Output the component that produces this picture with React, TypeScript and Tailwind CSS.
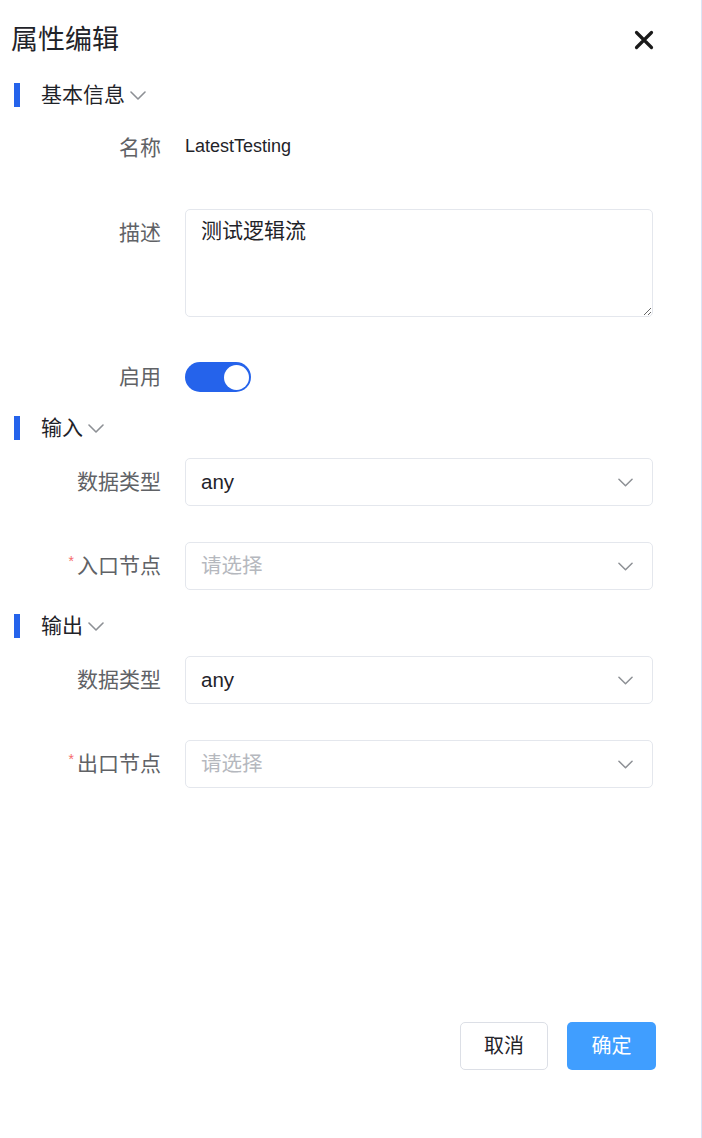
import { useState } from "react"

const font = { fontFamily: '"Liberation Sans", "Noto Sans CJK SC", sans-serif' }

function Chevron({ className }: { className?: string }) {
  return (
    <svg viewBox="0 0 16 9" className={className} fill="none">
      <path d="M1 1l7 7 7-7" stroke="currentColor" strokeWidth="1.6" strokeLinecap="round" strokeLinejoin="round" />
    </svg>
  )
}

function SectionTitle({ title, className }: { title: string; className?: string }) {
  return (
    <div className={`flex h-[30px] items-center ${className ?? ""}`}>
      <span className="ml-[14px] h-[24px] w-[6px] bg-[#2563eb]" />
      <span className="ml-[21px] text-[21px] text-[#1f2329]">{title}</span>
      <Chevron className="ml-[5px] mt-[1px] h-[9px] w-[16px] text-[#8d9095]" />
    </div>
  )
}

function FormItem({
  label,
  required,
  className,
  children,
}: {
  label: string
  required?: boolean
  className?: string
  children: React.ReactNode
}) {
  return (
    <div className={`flex ${className ?? ""}`}>
      <div className="flex h-[48px] w-[185px] shrink-0 items-center justify-end pr-[24px] text-[21px] text-[#606266]">
        {required && <span className="mr-[3px] -mt-[10px] text-[14px] text-[#f56c6c]">*</span>}
        {label}
      </div>
      <div className="mr-[48px] flex-1">{children}</div>
    </div>
  )
}

function Select({ value, placeholder }: { value?: string; placeholder: string }) {
  return (
    <div className="flex h-[48px] items-center rounded-[5px] border border-[#e4e7ed] bg-white pl-[15px] pr-[19px]">
      <span className={`flex-1 text-[20.5px] ${value ? "text-[#1f2329]" : "text-[#b5b8be]"}`}>
        {value ?? placeholder}
      </span>
      <Chevron className="h-[9px] w-[15px] text-[#8d9095]" />
    </div>
  )
}

export default function App() {
  const [enabled, setEnabled] = useState(true)
  const [desc, setDesc] = useState("测试逻辑流")

  return (
    <div style={font} className="flex h-[1138px] w-full flex-col border-r border-[#dbe5f6] bg-white">
      <div className="flex h-[80px] items-center pl-[11px] pr-[47px]">
        <h1 className="flex-1 text-[27px] font-normal text-[#1f2329]">属性编辑</h1>
        <svg viewBox="0 0 20 20" className="h-[20px] w-[20px] text-[#1a1a1a]" fill="none">
          <path d="M2.5 2.5l15 15M17.5 2.5l-15 15" stroke="currentColor" strokeWidth="3.2" strokeLinecap="round" />
        </svg>
      </div>

      <SectionTitle title="基本信息" />
      <FormItem label="名称" className="mt-[14px]">
        <div className="flex h-[48px] items-center pb-[4px] text-[18px] text-[#1f2329]">LatestTesting</div>
      </FormItem>
      <FormItem label="描述" className="mt-[37px]">
        <textarea
          value={desc}
          onChange={(e) => setDesc(e.target.value)}
          style={font}
          className="block h-[108px] w-full rounded-[5px] border border-[#e4e7ed] px-[15px] py-[6px] text-[21px] leading-[30px] text-[#1f2329] outline-none"
        />
      </FormItem>
      <FormItem label="启用" className="mt-[36px]">
        <div className="flex h-[48px] items-center">
          <button
            onClick={() => setEnabled(!enabled)}
            className={`flex h-[30px] w-[66px] items-center rounded-full p-[2px] ${
              enabled ? "justify-end bg-[#2563eb]" : "justify-start bg-[#dcdfe6]"
            }`}
          >
            <span className="h-[25px] w-[25px] rounded-full bg-white" />
          </button>
        </div>
      </FormItem>

      <SectionTitle title="输入" className="mt-[12px]" />
      <FormItem label="数据类型" className="mt-[15px]">
        <Select value="any" placeholder="请选择" />
      </FormItem>
      <FormItem label="入口节点" required className="mt-[36px]">
        <Select placeholder="请选择" />
      </FormItem>

      <SectionTitle title="输出" className="mt-[21px]" />
      <FormItem label="数据类型" className="mt-[15px]">
        <Select value="any" placeholder="请选择" />
      </FormItem>
      <FormItem label="出口节点" required className="mt-[36px]">
        <Select placeholder="请选择" />
      </FormItem>

      <div className="mt-auto flex justify-end gap-[19px] pb-[68px] pr-[45px]">
        <button className="h-[48px] w-[88px] rounded-[5px] border border-[#dcdfe6] bg-white text-[20px] text-[#1f2329]">
          取消
        </button>
        <button className="h-[48px] w-[89px] rounded-[5px] bg-[#409eff] text-[20px] text-white">确定</button>
      </div>
    </div>
  )
}
